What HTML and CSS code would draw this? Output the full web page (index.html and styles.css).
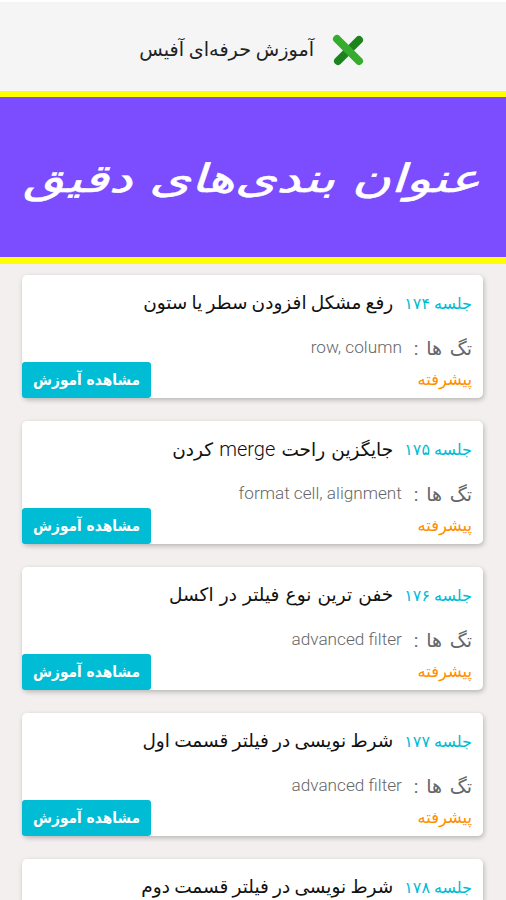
FILE: index.html
```html
<!DOCTYPE html>
<html lang="fa" dir="rtl">
<head>
  <meta charset="UTF-8" />
  <meta name="viewport" content="width=device-width, initial-scale=1" />
  <title>آموزش حرفه‌ای آفیس</title>
  <link rel="stylesheet" href="styles.css">
</head>
<body>
  <header class="top-bar">
    <svg class="logo" viewBox="0 0 34 34">
      <path d="M28 7L7 28" stroke="#1b841d" />
      <path d="M6 6L28 28" stroke="#35ad2c" />
    </svg>
    <h1>آموزش حرفه‌ای آفیس</h1>
  </header>

  <section class="banner">
    <h2>عنوان بندی‌های دقیق</h2>
  </section>

  <main class="lessons">
    <article class="card">
      <div class="card-head">
        <span class="session">جلسه ۱۷۴</span>
        <h3 class="tight">رفع مشکل افزودن سطر یا ستون</h3>
      </div>
      <p class="tags">تگ ها : <span dir="ltr">row, column</span></p>
      <p class="level">پیشرفته</p>
      <button type="button">مشاهده آموزش</button>
    </article>

    <article class="card">
      <div class="card-head">
        <span class="session">جلسه ۱۷۵</span>
        <h3 class="loose">جایگزین راحت <span class="latin">merge</span> کردن</h3>
      </div>
      <p class="tags">تگ ها : <span dir="ltr">format cell, alignment</span></p>
      <p class="level">پیشرفته</p>
      <button type="button">مشاهده آموزش</button>
    </article>

    <article class="card">
      <div class="card-head">
        <span class="session">جلسه ۱۷۶</span>
        <h3 class="loose">خفن ترین نوع فیلتر در اکسل</h3>
      </div>
      <p class="tags">تگ ها : <span dir="ltr">advanced filter</span></p>
      <p class="level">پیشرفته</p>
      <button type="button">مشاهده آموزش</button>
    </article>

    <article class="card">
      <div class="card-head">
        <span class="session">جلسه ۱۷۷</span>
        <h3 class="tight">شرط نویسی در فیلتر قسمت اول</h3>
      </div>
      <p class="tags">تگ ها : <span dir="ltr">advanced filter</span></p>
      <p class="level">پیشرفته</p>
      <button type="button">مشاهده آموزش</button>
    </article>

    <article class="card">
      <div class="card-head">
        <span class="session">جلسه ۱۷۸</span>
        <h3 class="tight">شرط نویسی در فیلتر قسمت دوم</h3>
      </div>
    </article>
  </main>
</body>
</html>
```

FILE: styles.css
```css
* {
  box-sizing: border-box;
}
body {
  margin: 0;
  height: 900px;
  overflow: hidden;
  background: #f2efee;
  font-family: Roboto, "DejaVu Sans", sans-serif;
}
h1, h2, h3, p {
  margin: 0;
  font-weight: 400;
  white-space: nowrap;
}
.top-bar {
  display: flex;
  align-items: center;
  gap: 17px;
  height: 91px;
  padding: 6px 141px 0 0;
  background: #f5f5f5;
  border-top: 2px solid #fff;
}
.logo {
  width: 34px;
  height: 34px;
  fill: none;
  stroke-width: 8;
  stroke-linecap: round;
}
.top-bar h1 {
  font-size: 19.2px;
  line-height: 30px;
  color: #222;
}
.banner {
  display: flex;
  align-items: center;
  justify-content: center;
  height: 173px;
  padding: 3px 0 0 6px;
  background: #7c4dff;
  border-top: 6px solid #ff0;
  border-bottom: 7px solid #ff0;
}
.banner h2 {
  font-family: "DejaVu Sans", sans-serif;
  font-size: 39px;
  line-height: 80px;
  color: #fff;
  -webkit-text-stroke: 0.6px #fff;
  transform: scaleX(1.36) skewX(-14deg);
}
.lessons {
  padding: 11px 23px 0 22px;
}
.card {
  position: relative;
  height: 123px;
  margin-bottom: 23px;
  padding: 13px 11px 0;
  background: #fff;
  border-radius: 5px;
  box-shadow: 1px 2px 5px rgba(0, 0, 0, 0.24);
}
.card:last-child {
  height: 42px;
  margin-bottom: 0;
  border-radius: 5px 5px 0 0;
}
.card-head {
  display: flex;
  align-items: center;
  gap: 11px;
  height: 30px;
}
.session {
  font-size: 16px;
  color: #00bcd4;
}
.card h3 {
  font-size: 18.5px;
  line-height: 26px;
  color: #111;
}
.card h3.tight {
  word-spacing: -0.4px;
}
.card h3.loose {
  word-spacing: 1.6px;
}
.latin {
  font-size: 20px;
}
.card h3 .latin {
  font-weight: 300;
}
.tags {
  display: flex;
  align-items: center;
  gap: 12px;
  height: 30px;
  margin-top: 15px;
  font-size: 19px;
  word-spacing: 3px;
  color: #666;
}
.tags span {
  padding-bottom: 2px;
  font-size: 17.2px;
  font-weight: 300;
  word-spacing: 0;
}
.level {
  height: 30px;
  margin-top: 2px;
  font-size: 16.3px;
  line-height: 30px;
  color: #ff8f00;
}
.card button {
  position: absolute;
  left: 0;
  bottom: 0;
  width: 129px;
  height: 36px;
  padding: 0;
  border: none;
  border-radius: 3px;
  background: #00bcd4;
  color: #fff;
  font-family: "DejaVu Sans Condensed", "DejaVu Sans", sans-serif;
  font-size: 15.3px;
  font-weight: 700;
  white-space: nowrap;
}
```
